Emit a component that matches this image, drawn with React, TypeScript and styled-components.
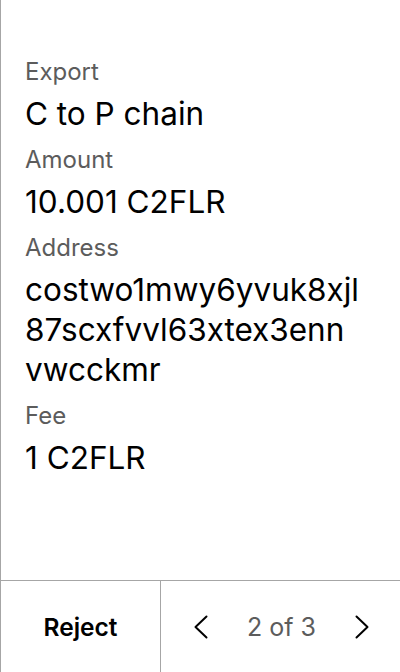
import React from 'react';
import styled, { createGlobalStyle } from 'styled-components';

const GlobalStyle = createGlobalStyle`
  html, body {
    margin: 0;
    padding: 0;
    background: #ffffff;
  }
  body {
    font-family: Inter, "Noto Sans", sans-serif;
    color: #000000;
  }
`;

const Screen = styled.div`
  width: 400px;
  height: 672px;
  box-sizing: border-box;
  border-left: 1px solid #a6a6a6;
  display: flex;
  flex-direction: column;
`;

const Details = styled.section`
  flex: 1;
  padding: 57px 24px 0 24px;
  display: flex;
  flex-direction: column;
`;

const Field = styled.div`
  display: flex;
  flex-direction: column;
  margin-bottom: 11px;
`;

const Label = styled.div`
  font-size: 24px;
  line-height: 30px;
  color: #5c5c5c;
  margin-bottom: 7px;
`;

const Value = styled.div`
  font-size: 31.5px;
  line-height: 40px;
  font-weight: 400;
  word-break: break-all;
`;

const ValueLine = styled.span`
  display: block;
`;

const Footer = styled.footer`
  height: 92px;
  box-sizing: border-box;
  border-top: 1px solid #a6a6a6;
  display: grid;
  grid-template-columns: 160px 1fr;
`;

const RejectButton = styled.button`
  all: unset;
  display: flex;
  align-items: center;
  justify-content: center;
  font-family: Inter, sans-serif;
  font-size: 24.5px;
  font-weight: 600;
  color: #000;
  border-right: 1px solid #a6a6a6;
`;

const Pager = styled.div`
  display: flex;
  align-items: center;
  justify-content: space-between;
  padding: 0 26px 0 28px;
`;

const PageText = styled.span`
  font-size: 25px;
  color: #5c5c5c;
`;

const ArrowButton = styled.button`
  all: unset;
  display: flex;
  align-items: center;
  justify-content: center;
  width: 24px;
  height: 24px;
`;

const Chevron: React.FC<{ dir: 'left' | 'right' }> = ({ dir }) => (
  <svg width="24" height="24" viewBox="0 0 24 24" fill="none" stroke="#000" strokeWidth="2" strokeLinecap="round" strokeLinejoin="round">
    {dir === 'left' ? <path d="M17.5 1.5 L6.5 12 L17.5 22.5" /> : <path d="M6.5 1.5 L17.5 12 L6.5 22.5" />}
  </svg>
);

// addresses are shown in fixed chunks so every line holds the same count
const chunk = (s: string, size: number) => {
  const out: string[] = [];
  for (let i = 0; i < s.length; i += size) out.push(s.slice(i, i + size));
  return out;
};

const fields = [
  { label: 'Export', value: 'C to P chain' },
  { label: 'Amount', value: '10.001 C2FLR' },
  { label: 'Address', value: 'costwo1mwy6yvuk8xjl87scxfvvl63xtex3ennvwcckmr', chunked: true },
  { label: 'Fee', value: '1 C2FLR' },
];

export default function App() {
  return (
    <>
      <GlobalStyle />
      <Screen>
        <Details>
          {fields.map((f) => (
            <Field key={f.label}>
              <Label>{f.label}</Label>
              <Value>
                {f.chunked
                  ? chunk(f.value, 19).map((line) => <ValueLine key={line}>{line}</ValueLine>)
                  : f.value}
              </Value>
            </Field>
          ))}
        </Details>
        <Footer>
          <RejectButton>Reject</RejectButton>
          <Pager>
            <ArrowButton>
              <Chevron dir="left" />
            </ArrowButton>
            <PageText>2 of 3</PageText>
            <ArrowButton>
              <Chevron dir="right" />
            </ArrowButton>
          </Pager>
        </Footer>
      </Screen>
    </>
  );
}
